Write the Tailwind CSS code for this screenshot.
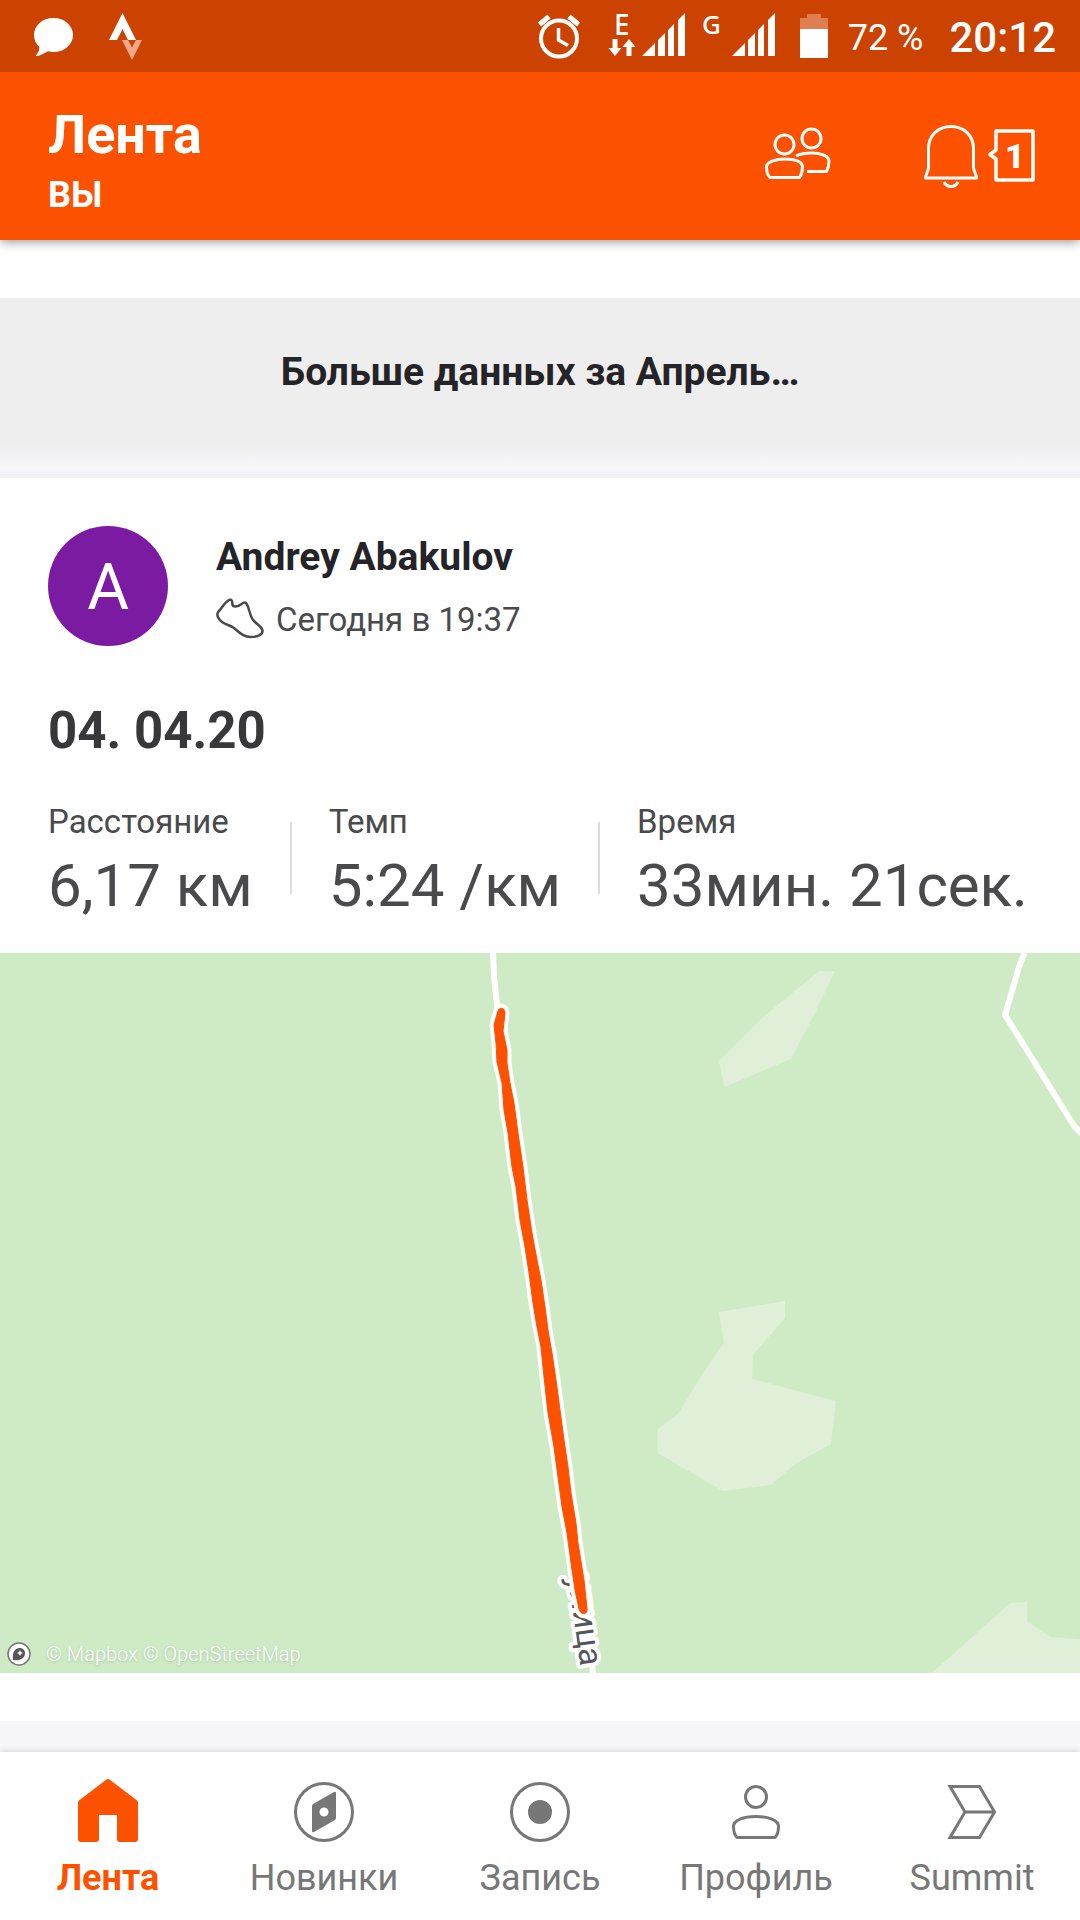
<!DOCTYPE html>
<html lang="ru">
<head>
  <meta charset="UTF-8" />
  <meta name="viewport" content="width=device-width, initial-scale=1.0"/>
  <title>Лента</title>
  <script src="https://cdn.jsdelivr.net/npm/@tailwindcss/browser@4"></script>
</head>
<body class="flex min-h-screen flex-col bg-white font-[Roboto,'Noto_Sans',sans-serif] text-[#242428]">

  <!-- Status bar -->
  <div class="z-20 flex h-[72px] items-center justify-between bg-[#cc4200] pr-6 pl-[30px] text-white">
    <div class="flex items-center gap-[30px]">
      <svg class="h-12 w-12" viewBox="0 0 48 48" fill="currentColor">
        <path d="M23.500 6c11 0 19.500 7.500 19.500 17s-8.500 17-19.500 17c-2 0-4-.3-5.500-.8C14.500 41 10 44 6.500 44c-.6 0-.7-.6-.3-1C8.200 41 9.500 38 9.300 35 6 32 4 28 4 23 4 13.500 12.500 6 23.500 6z"/>
      </svg>
      <svg class="h-12 w-9" viewBox="0 0 36 48">
        <path d="M14.500 1 1 28h8l5.500-11L20 28h8z" fill="#fff"/>
        <path d="M14 28h6l4 7.500 4-7.500h6L24 48z" fill="#efa888"/>
      </svg>
    </div>
    <div class="flex items-center">
      <svg class="h-12 w-12" viewBox="0 0 48 48" fill="none" stroke="currentColor">
        <circle cx="23" cy="26.500" r="18" stroke-width="4"/>
        <path d="M22.500 16v12l9.500 5.500" stroke-width="3.500"/>
        <path d="m3.500 12.500 9.500-8M42.500 12.500l-9.500-8" stroke-width="5"/>
      </svg>
      <svg class="ml-6 h-[72px] w-20" viewBox="0 -12 80 72" fill="currentColor">
        <text x="6" y="23" font-size="28" font-weight="500" font-family="'Noto Sans', sans-serif">E</text>
        <path d="M4.500 27h5v9h4L7 44l-6.500-8h4zM18.500 44h5v-9h4L21 27l-6.500 8h4z"/>
        <path d="M34 44 47 31v13zM50 44V28l7-7v23zM60 44V18l6-6v32zM70 44V8l7-7v43z"/>
      </svg>
      <svg class="ml-3 h-[72px] w-[84px]" viewBox="-4 -12 84 72" fill="currentColor">
        <text x="-2" y="22" font-size="26" font-weight="500" font-family="'Noto Sans', sans-serif">G</text>
        <path d="M28 44 41 31v13zM44 44V28l7-7v23zM54 44V18l6-6v32zM64 44V8l7-7v43z"/>
      </svg>
      <svg class="ml-4 h-12 w-7" viewBox="0 0 28 48">
        <path d="M7 2h14v4h7v11H0V6h7z" fill="#df7e50"/>
        <path d="M0 17h28v29H0z" fill="#fff"/>
      </svg>
      <span class="ml-5 pt-1 text-[36px] leading-[44px]">72 %</span>
      <span class="ml-[26px] pt-1 text-[42px] leading-[44px] font-medium">20:12</span>
    </div>
  </div>

  <!-- App bar -->
  <header class="z-10 flex items-start justify-between bg-[#fc5200] pt-[31px] pr-10 pb-[23px] pl-12 text-white shadow-[0_2px_10px_rgba(0,0,0,0.4)]">
    <div class="flex flex-col gap-1.5">
      <h1 class="text-[54px] leading-[64px] font-bold">Лента</h1>
      <p class="text-[36px] leading-[44px] font-bold">ВЫ</p>
    </div>
    <div class="flex items-center gap-[87px] pt-3.5">
      <button type="button" aria-label="Друзья">
        <svg class="block h-[72px] w-[72px]" viewBox="0 0 72 72" fill="none" stroke="currentColor" stroke-width="3" stroke-linejoin="round">
          <circle cx="22.500" cy="27.500" r="9.500"/>
          <circle cx="49.500" cy="21.500" r="9.500"/>
          <path d="M8 60.500h29.500c2-3 3-6.500 3-10.500 0-5.500-8-8-17.500-8S4.500 45 4.500 50c0 4 1 8 3.500 10.500z"/>
          <path d="M34 39c4-2 9-3 15.500-3 9.500 0 17.500 3 17.500 8 0 4-.8 7.500-2.500 10.500H45"/>
        </svg>
      </button>
      <button type="button" class="flex items-center gap-[7px]" aria-label="Уведомления">
        <svg class="block h-[72px] w-[60px]" viewBox="0 0 60 72" fill="none" stroke="currentColor" stroke-width="3" stroke-linejoin="round">
          <path d="M30 9.500c-13 0-22.500 9-22.500 22v19c0 3.500-3 7-3 10.500h51c0-3.500-3-7-3-10.500v-19c0-13-9.500-22-22.500-22z"/>
          <path d="M23 65c3 6 11 6 14 0"/>
        </svg>
        <svg class="block h-[72px] w-[52px]" viewBox="0 0 52 72" fill="none" stroke="currentColor" stroke-width="3.500" stroke-linejoin="round">
          <path d="M8 14h37v49H8V42l-6-4.500L8 33z"/>
          <text x="17" y="51" fill="currentColor" stroke="none" font-size="34" font-weight="900">1</text>
        </svg>
      </button>
    </div>
  </header>

  <main class="flex flex-1 flex-col">
    <button type="button" class="mt-[58px] w-full bg-[#eeeeee] pt-[50px] pb-[46px] text-center text-[39px] leading-[48px] font-bold">Больше данных за Апрель…</button>
    <div class="h-9 bg-linear-to-b from-[#eeeeee] via-[#f7f7fb] via-75% to-[#f0f0f4]"></div>

    <!-- Activity card -->
    <article class="bg-white pb-12">
      <div class="flex items-center gap-12 px-12 pt-12">
        <div class="flex size-[120px] items-center justify-center rounded-full bg-[#7b1ba2] pt-1 text-[64px] text-white">A</div>
        <div class="flex flex-col gap-[17px] pt-[3px]">
          <h2 class="text-[39px] leading-[48px] font-bold">Andrey Abakulov</h2>
          <div class="flex items-center gap-3 text-[33px] leading-[44px] text-[#4a4a4d]">
            <svg class="h-11 w-12" viewBox="0 0 48 44" fill="none" stroke="currentColor" stroke-width="2.500" stroke-linejoin="round">
              <path d="M13 2c-5 3-7 8-10.500 11.500C0 16.500 2 21 6 24c4 3 8 3 12 6 5 4 9 9 17 9 6 0 12-2 11.500-6.500C46 29 42 27 38 23c-5-5-4-13-8-18-2-2-5 2-8 3-3 .8-5 .5-5.500-1C16 5 17 1 13 2z"/>
            </svg>
            <time>Сегодня в 19:37</time>
          </div>
        </div>
      </div>

      <h3 class="mt-[53px] px-12 text-[51px] leading-[64px] font-bold text-[#38383a]">04. 04.20</h3>

      <dl class="mt-[39px] flex gap-[37px] px-12 pb-[31px] whitespace-nowrap text-[#4a4a4d]">
        <div class="flex flex-col gap-2">
          <dt class="text-[33px] leading-[40px]">Расстояние</dt>
          <dd class="text-[60px] leading-[72px]">6,17 км</dd>
        </div>
        <div class="mt-5 h-[72px] w-0.5 bg-[#dcdce0]"></div>
        <div class="flex flex-col gap-2">
          <dt class="text-[33px] leading-[40px]">Темп</dt>
          <dd class="text-[60px] leading-[72px]">5:24 /км</dd>
        </div>
        <div class="mt-5 h-[72px] w-0.5 bg-[#dcdce0]"></div>
        <div class="flex flex-col gap-2">
          <dt class="text-[33px] leading-[40px]">Время</dt>
          <dd class="text-[60px] leading-[72px]">33мин. 21сек.</dd>
        </div>
      </dl>

      <div class="relative">
        <svg class="block w-full" viewBox="0 0 1080 720">
          <rect width="1080" height="720" fill="#ceebc6"/>
          <g fill="#dfefd8">
            <path d="M819 18h16l-22 46-22 42-66.500 28-5.500-26 43-43z"/>
            <path d="M719 359l66-11v17l-32 37-1 24 84 22-5 43-36 20-24 21-48 6-65.500-38v-24l20.500-15 25-41 21-30z"/>
            <path d="M932 720l78-70 17-1v19l23 16 30 2v34z"/>
          </g>
          <g fill="none" stroke="#fff" stroke-width="6" stroke-linejoin="round">
            <path d="M493 0l1 24 3.500 32M585 655l8 65"/>
            <path d="M1024.500 0l-5.500 14-14 48 68.500 110 8 9"/>
          </g>
          <text transform="translate(568 624) rotate(82)" font-size="33" fill="#55555c" stroke="#fff" stroke-width="8" stroke-linejoin="round" paint-order="stroke">улица</text>
          <!-- Recorded track: white casing, then the line -->
          <defs>
            <path id="track" d="M498 58 494 72 496 90 497 109 502 130 504 157 508 180 512 214 516 234 520 267 525 294 529 320 533 350 537 374 541 394 544 424 548 460 554 494 558 524 562 554 567 580 571 610 575 637 579 656C581 663 588 662 587 655L584 627 578 590 576 570 571 540 568 514 564 487 560 457 556 427 552 400 548 377 545 354 541 327 537 307 532 280 527 247 523 214 518 180 514 150 510 130 507 110 507 97 503 78 505 60C505 54 499 54 498 58z"/>
          </defs>
          <use href="#track" fill="#fff" stroke="#fff" stroke-width="9" stroke-linejoin="round"/>
          <use href="#track" fill="#fc5200" stroke="#fc5200" stroke-width="1" stroke-linejoin="round"/>
        </svg>
        <div class="absolute bottom-[7px] left-[7px] flex items-center gap-[15px] text-[20px] leading-6 font-light text-white">
          <svg class="size-6" viewBox="0 0 24 24">
            <circle cx="12" cy="12" r="11" fill="#fff" stroke="#777" stroke-width="1.500"/>
            <path d="M6 18c-1-6 1-12 7-12 3 0 5 2.500 5 5 0 6-6 8-12 7z" fill="#55555a"/>
            <path d="M13 8l1 2 2 1-2 1-1 2-1-2-2-1 2-1z" fill="#fff"/>
          </svg>
          <p class="text-shadow-[0_1px_3px_rgba(0,0,0,0.2)]"><a href="#mapbox">© Mapbox</a> <a href="#osm">© OpenStreetMap</a></p>
        </div>
      </div>
    </article>
    <div class="min-h-6 flex-1 bg-[#f7f7fa]"></div>
  </main>

  <!-- Bottom navigation -->
  <nav class="sticky bottom-0 grid grid-cols-5 bg-white pt-6 pb-5 text-[36px] leading-[44px] text-[#777777] shadow-[0_-1px_6px_rgba(0,0,0,0.14)]">
    <a href="#feed" class="flex flex-col items-center gap-2 font-bold text-[#fc5200]" aria-current="page">
      <svg class="size-[72px]" viewBox="0 0 72 72" fill="currentColor">
        <path d="M34.500 3.500q1.500-1 3 0l27.500 21q1 1 1 2V63q0 3-3 3H48q-3 0-3-3V39H27v24q0 3-3 3H9q-3 0-3-3V26.500q0-1 1-2z"/>
      </svg>
      Лента
    </a>
    <a href="#explore" class="flex flex-col items-center gap-2">
      <svg class="size-[72px]" viewBox="0 0 72 72">
        <circle cx="36" cy="36" r="28.500" fill="none" stroke="currentColor" stroke-width="3"/>
        <path fill="currentColor" fill-rule="evenodd" d="M46 16q2-1 2 1v25q0 1-1 2L26 56q-2 1-2-1V30q0-1 1-2zM36 31.500a4.500 4.500 0 1 0 0 9 4.500 4.500 0 0 0 0-9z"/>
      </svg>
      Новинки
    </a>
    <a href="#record" class="flex flex-col items-center gap-2">
      <svg class="size-[72px]" viewBox="0 0 72 72">
        <circle cx="36" cy="36" r="28.500" fill="none" stroke="currentColor" stroke-width="3"/>
        <circle cx="36" cy="36" r="12" fill="currentColor"/>
      </svg>
      Запись
    </a>
    <a href="#profile" class="flex flex-col items-center gap-2">
      <svg class="size-[72px]" viewBox="0 0 72 72" fill="none" stroke="currentColor" stroke-width="3" stroke-linejoin="round">
        <circle cx="36" cy="21" r="10.500"/>
        <path d="M17 61.500h38c3-3 3.500-7 3.500-11 0-6.500-10-10-22.500-10s-22.500 3.500-22.500 10c0 4 .5 8 3.500 11z"/>
      </svg>
      Профиль
    </a>
    <a href="#summit" class="flex flex-col items-center gap-2">
      <svg class="size-[72px]" viewBox="0 0 72 72" fill="none" stroke="currentColor" stroke-width="3">
        <path d="M14 10.500h29.500L58.500 36l-15 25.500H14L29 36zM29 36h29.500"/>
      </svg>
      Summit
    </a>
  </nav>
</body>
</html>
